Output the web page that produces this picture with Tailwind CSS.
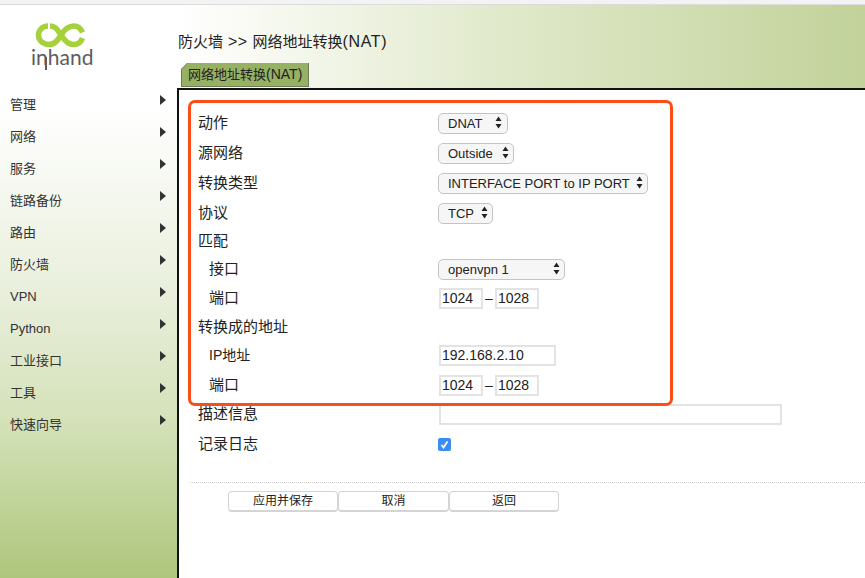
<!DOCTYPE html>
<html lang="zh">
<head>
<meta charset="UTF-8">
<title>网络地址转换(NAT)</title>
<script src="https://cdn.jsdelivr.net/npm/@tailwindcss/browser@4"></script>
</head>
<body class="w-[865px] h-[578px] overflow-hidden bg-white text-[#222] font-['Liberation_Sans','Noto_Sans_CJK_SC',sans-serif]">
<div class="relative h-[578px] flex flex-col">
  <!-- browser strip -->
  <div class="h-[5px] shrink-0 bg-[#f3f3f3] border-b border-[#dcdcdc]"></div>

  <div class="flex flex-1 min-h-0">
    <!-- sidebar -->
    <aside class="w-[177px] shrink-0 bg-[linear-gradient(180deg,#ffffff_0%,#ffffff_18%,#e9efdc_50%,#d5e2ba_72%,#aec67c_100%)]">
      <div class="h-[84px] relative">
        <svg class="absolute left-[30px] top-[16px]" width="60" height="36" viewBox="0 0 60 36" fill="none" stroke="#a4d13c" stroke-width="5.5">
          <path d="M18 5C12 5 8.5 9.5 8.5 14C8.5 19.5 13 23.5 19 23.5C25 23.5 28 19 31 14C34 9 38 5 44 5C48.5 5 51 8 52.5 11.5"/>
          <path d="M20 5C26 5 28 9.5 31 14C34 19 38 23.5 44 23.5C48.5 23.5 51 21 52.5 17"/>
        </svg>
        <div class="absolute left-[31px] top-[37px] text-[21px] leading-[30px] font-['Lato','Liberation_Sans',sans-serif] text-[#5c5c5c]">inhand</div>
        <div class="absolute left-[45px] top-[52px] w-[2px] h-[13px] bg-[#5c5c5c]"></div>
      </div>
      <nav class="text-[13px] leading-[32px] text-[#333]">
        <div class="relative h-[32px] pl-[10px]">管理<span class="absolute left-[160px] top-[6px] w-0 h-0 border-y-[5px] border-y-transparent border-l-[6px] border-l-[#333]"></span></div>
        <div class="relative h-[32px] pl-[10px]">网络<span class="absolute left-[160px] top-[6px] w-0 h-0 border-y-[5px] border-y-transparent border-l-[6px] border-l-[#333]"></span></div>
        <div class="relative h-[32px] pl-[10px]">服务<span class="absolute left-[160px] top-[6px] w-0 h-0 border-y-[5px] border-y-transparent border-l-[6px] border-l-[#333]"></span></div>
        <div class="relative h-[32px] pl-[10px]">链路备份<span class="absolute left-[160px] top-[6px] w-0 h-0 border-y-[5px] border-y-transparent border-l-[6px] border-l-[#333]"></span></div>
        <div class="relative h-[32px] pl-[10px]">路由<span class="absolute left-[160px] top-[6px] w-0 h-0 border-y-[5px] border-y-transparent border-l-[6px] border-l-[#333]"></span></div>
        <div class="relative h-[32px] pl-[10px]">防火墙<span class="absolute left-[160px] top-[6px] w-0 h-0 border-y-[5px] border-y-transparent border-l-[6px] border-l-[#333]"></span></div>
        <div class="relative h-[32px] pl-[10px]">VPN<span class="absolute left-[160px] top-[6px] w-0 h-0 border-y-[5px] border-y-transparent border-l-[6px] border-l-[#333]"></span></div>
        <div class="relative h-[32px] pl-[10px]">Python<span class="absolute left-[160px] top-[6px] w-0 h-0 border-y-[5px] border-y-transparent border-l-[6px] border-l-[#333]"></span></div>
        <div class="relative h-[32px] pl-[10px]">工业接口<span class="absolute left-[160px] top-[6px] w-0 h-0 border-y-[5px] border-y-transparent border-l-[6px] border-l-[#333]"></span></div>
        <div class="relative h-[32px] pl-[10px]">工具<span class="absolute left-[160px] top-[6px] w-0 h-0 border-y-[5px] border-y-transparent border-l-[6px] border-l-[#333]"></span></div>
        <div class="relative h-[32px] pl-[10px]">快速向导<span class="absolute left-[160px] top-[6px] w-0 h-0 border-y-[5px] border-y-transparent border-l-[6px] border-l-[#333]"></span></div>
      </nav>
    </aside>

    <div class="flex-1 min-w-0 flex flex-col">
      <!-- header with tab -->
      <header class="h-[85px] shrink-0 pl-px pt-[27px] bg-[linear-gradient(90deg,#ffffff_0%,#dfe8c8_50%,#c2d29a_100%)] border-b-2 border-[#111]">
        <h1 class="text-[15px] leading-[20px] text-[#222]">防火墙<span class="text-[16px] tracking-[0.5px]"> &gt;&gt; </span>网络地址转换<span class="text-[16px] tracking-[0.6px]">(NAT)</span></h1>
        <div class="mt-[11px] ml-[3px] w-[128px] h-[24px] bg-[#6f7a58] [clip-path:polygon(6px_0,100%_0,100%_100%,0_100%,0_6px)]">
          <div class="w-[126px] h-[23px] ml-px mt-px pl-[6px] text-[13px] leading-[22px] bg-[#96b163] [clip-path:polygon(6px_0,100%_0,100%_100%,0_100%,0_6px)]">网络地址转换<span class="text-[14px]">(NAT)</span></div>
        </div>
      </header>

      <!-- form -->
      <main class="flex-1 border-l-2 border-[#111] pt-[18px] text-[15px]">
        <div class="pl-[19px]">
          <div class="grid grid-cols-[240px_1fr] h-[30px] items-center"><span>动作</span>
            <div class="relative w-[70px]"><select class="appearance-none w-full h-[21px] pl-[9px] text-[13px] bg-[#f6f6f6] border border-[#c4c4c4] rounded-[5px]"><option>DNAT</option></select><svg class="absolute right-[6px] top-[4px] pointer-events-none" width="7" height="13" viewBox="0 0 7 13" fill="#222"><path d="M3.5 0.5L6.5 5H0.5ZM3.5 12.5L0.5 8H6.5Z"/></svg></div>
          </div>
          <div class="grid grid-cols-[240px_1fr] h-[30px] items-center"><span>源网络</span>
            <div class="relative w-[76px]"><select class="appearance-none w-full h-[21px] pl-[9px] text-[13px] bg-[#f6f6f6] border border-[#c4c4c4] rounded-[5px]"><option>Outside</option></select><svg class="absolute right-[5px] top-[4px] pointer-events-none" width="7" height="13" viewBox="0 0 7 13" fill="#222"><path d="M3.5 0.5L6.5 5H0.5ZM3.5 12.5L0.5 8H6.5Z"/></svg></div>
          </div>
          <div class="grid grid-cols-[240px_1fr] h-[30px] items-center"><span>转换类型</span>
            <div class="relative w-[210px]"><select class="appearance-none w-full h-[21px] pl-[9px] text-[13px] bg-[#f6f6f6] border border-[#c4c4c4] rounded-[5px]"><option>INTERFACE PORT to IP PORT</option></select><svg class="absolute right-[5px] top-[4px] pointer-events-none" width="7" height="13" viewBox="0 0 7 13" fill="#222"><path d="M3.5 0.5L6.5 5H0.5ZM3.5 12.5L0.5 8H6.5Z"/></svg></div>
          </div>
          <div class="grid grid-cols-[240px_1fr] h-[30px] items-center"><span>协议</span>
            <div class="relative w-[55px]"><select class="appearance-none w-full h-[21px] pl-[9px] text-[13px] bg-[#f6f6f6] border border-[#c4c4c4] rounded-[5px]"><option>TCP</option></select><svg class="absolute right-[5px] top-[4px] pointer-events-none" width="7" height="13" viewBox="0 0 7 13" fill="#222"><path d="M3.5 0.5L6.5 5H0.5ZM3.5 12.5L0.5 8H6.5Z"/></svg></div>
          </div>
          <div class="h-[27px] flex items-center">匹配</div>
          <div class="grid grid-cols-[240px_1fr] h-[28px] items-center"><span class="pl-[11px]">接口</span>
            <div class="relative w-[127px]"><select class="appearance-none w-full h-[21px] pl-[9px] text-[13px] bg-[#f6f6f6] border border-[#c4c4c4] rounded-[5px]"><option>openvpn 1</option></select><svg class="absolute right-[5px] top-[4px] pointer-events-none" width="7" height="13" viewBox="0 0 7 13" fill="#222"><path d="M3.5 0.5L6.5 5H0.5ZM3.5 12.5L0.5 8H6.5Z"/></svg></div>
          </div>
          <div class="grid grid-cols-[241px_1fr] h-[30px] items-center"><span class="pl-[11px]">端口</span>
            <div class="flex items-center text-[14px]"><input value="1024" class="w-[44px] h-[21px] pl-px border-2 border-[#e3e3e3]"><span class="w-[12px] text-center">–</span><input value="1028" class="w-[44px] h-[21px] pl-px border-2 border-[#e3e3e3]"></div>
          </div>
          <div class="h-[28px] flex items-center">转换成的地址</div>
          <div class="grid grid-cols-[241px_1fr] h-[29px] items-center"><span class="pl-[11px] text-[14px]">IP地址</span>
            <input value="192.168.2.10" class="w-[117px] h-[21px] pl-px text-[14px] border-2 border-[#e3e3e3]">
          </div>
          <div class="grid grid-cols-[241px_1fr] h-[30px] items-center"><span class="pl-[11px]">端口</span>
            <div class="flex items-center text-[14px]"><input value="1024" class="w-[44px] h-[21px] pl-px border-2 border-[#e3e3e3]"><span class="w-[12px] text-center">–</span><input value="1028" class="w-[44px] h-[21px] pl-px border-2 border-[#e3e3e3]"></div>
          </div>
          <div class="grid grid-cols-[241px_1fr] h-[29px] items-center"><span>描述信息</span>
            <input class="w-[343px] h-[21px] border-2 border-[#e3e3e3]">
          </div>
          <div class="grid grid-cols-[241px_1fr] h-[30px] items-center"><span>记录日志</span>
            <div class="-ml-px mt-px w-[13px] h-[13px] rounded-[2px] bg-[#3a8ef2] flex items-center justify-center"><svg width="9" height="9" viewBox="0 0 9 9" fill="none"><path d="M1.5 5L3.5 7.5L7.5 1.5" stroke="#fff" stroke-width="1.8"/></svg></div>
          </div>
        </div>
        <div class="mt-[23px] ml-[11px] border-t border-dotted border-[#ccc]"></div>
        <div class="ml-[49px] mt-[8px] flex text-[12px]">
          <button class="w-[110px] h-[21px] bg-white border border-[#d4d4d4] border-b-2 rounded-[4px]">应用并保存</button>
          <button class="w-[111px] h-[21px] bg-white border border-[#d4d4d4] border-b-2 rounded-[4px]">取消</button>
          <button class="w-[110px] h-[21px] bg-white border border-[#d4d4d4] border-b-2 rounded-[4px]">返回</button>
        </div>
      </main>
    </div>
  </div>

  <!-- red annotation over the form -->
  <div class="absolute left-[188px] top-[100px] w-[485px] h-[306px] border-[3px] border-[#fb4d16] rounded-[7px] pointer-events-none"></div>
</div>
</body>
</html>
